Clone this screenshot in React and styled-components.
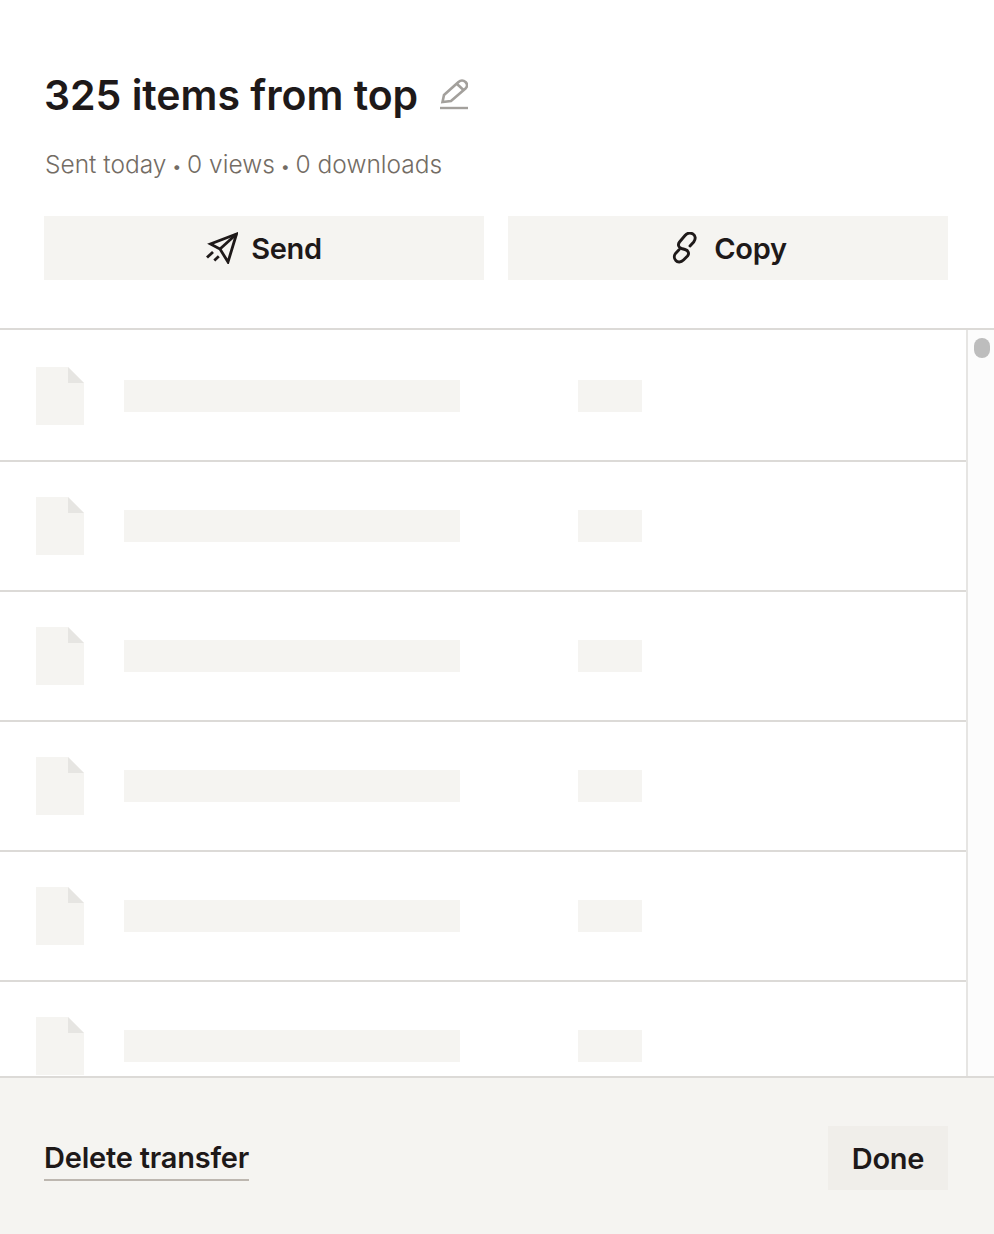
import React from 'react';
import styled, { createGlobalStyle } from 'styled-components';

const GlobalStyle = createGlobalStyle`
  html, body {
    margin: 0;
    padding: 0;
    background: #fff;
  }
  * {
    box-sizing: border-box;
  }
`;

const Wrapper = styled.div`
  display: flex;
  flex-direction: column;
  width: 994px;
  height: 1234px;
  overflow: hidden;
  font-family: Inter, "Liberation Sans", sans-serif;
  color: #1e1919;
`;

const Header = styled.header`
  height: 328px;
  padding: 68px 46px 0 44px;
  flex-shrink: 0;
`;

const TitleRow = styled.div`
  display: flex;
  align-items: center;
  height: 54px;
`;

const Title = styled.h1`
  margin: 0;
  font-size: 41px;
  line-height: 54px;
  font-weight: 600;
  letter-spacing: -0.03px;
`;

const EditButton = styled.button`
  display: flex;
  margin-left: 22px;
  padding: 0;
  border: 0;
  background: none;
  color: #a3a09c;
`;

const Meta = styled.p`
  margin: 25px 0 0 1px;
  font-size: 24.5px;
  line-height: 34px;
  font-weight: 300;
  color: #736c64;
`;

const Dot = styled.span`
  margin: 0 -1.6px;
  font-size: 18px;
  line-height: 1;
`;

const Actions = styled.div`
  display: grid;
  grid-template-columns: 1fr 1fr;
  gap: 24px;
  margin-top: 35px;
`;

const ActionButton = styled.button`
  display: flex;
  align-items: center;
  justify-content: center;
  gap: 13px;
  height: 64px;
  padding: 0;
  border: 0;
  background: #f5f4f1;
  color: inherit;
  font: inherit;
  font-size: 29px;
  font-weight: 600;
  letter-spacing: -0.3px;
`;

const Content = styled.section`
  display: flex;
  flex: 1;
  min-height: 0;
  border-top: 2px solid #dcdad7;
`;

const List = styled.ul`
  flex: 1;
  min-width: 0;
  margin: 0;
  padding: 2px 0 0;
  list-style: none;
  overflow: hidden;
`;

const Row = styled.li`
  display: flex;
  align-items: center;
  height: 130px;
  padding-left: 36px;
  border-bottom: 2px solid #dcdad7;
`;

const FileShape = styled.svg`
  flex-shrink: 0;
  margin-right: 40px;
`;

const Skeleton = styled.div`
  width: ${(props) => props.$width}px;
  height: 32px;
  margin-right: ${(props) => props.$gap || 0}px;
  background: #f5f4f1;
`;

const Rail = styled.div`
  width: 28px;
  flex-shrink: 0;
  padding: 8px 4px 0 6px;
  border-left: 2px solid #e6e5e3;
  background: #fcfcfc;
`;

const Thumb = styled.div`
  width: 16px;
  height: 20px;
  border-radius: 8px;
  background: #bdbdbd;
`;

const Footer = styled.footer`
  display: flex;
  align-items: center;
  justify-content: space-between;
  height: 158px;
  flex-shrink: 0;
  padding: 4px 46px 0 44px;
  border-top: 2px solid #dcdad7;
  background: #f5f4f1;
`;

const DeleteLink = styled.a`
  margin-top: 4px;
  padding-bottom: 3px;
  border-bottom: 2px solid #bdb7b0;
  font-size: 29px;
  line-height: 36px;
  font-weight: 600;
  letter-spacing: -0.22px;
`;

const DoneButton = styled.button`
  width: 120px;
  height: 64px;
  padding: 0;
  border: 0;
  background: #f0eeea;
  color: inherit;
  font: inherit;
  font-size: 29px;
  font-weight: 600;
  letter-spacing: -0.3px;
`;

const PencilIcon = () => (
  <svg width="28" height="32" viewBox="0 0 28 32" fill="none" stroke="currentColor" strokeWidth="2.6">
    <path d="M2.5 23 L4 16 L18.5 3 C20.5 1.2 23.5 1.2 25.5 3 C27.5 5 27.5 7.5 25.5 9.5 L11 22 Z" />
    <path d="M17 5 L23.5 11" />
    <path d="M0 29 H28" strokeWidth="2.4" />
  </svg>
);

const SendIcon = () => (
  <svg width="32" height="32" viewBox="0 0 32 32" fill="none" stroke="currentColor" strokeWidth="2.8">
    <path d="M30.5 2 L4.5 12 L14 17 L22 30 Z" />
    <path d="M30.5 2 L14 17" />
    <path d="M1 25.5 L7 20" />
    <path d="M8.3 28.5 L12.8 24.3" />
  </svg>
);

const LinkIcon = () => (
  <svg width="32" height="32" viewBox="0 0 32 32" fill="none" stroke="currentColor" strokeWidth="2.9" strokeLinecap="round" strokeLinejoin="round">
    <path d="M21 14 L24.7 10 C27 7 26.5 3.5 24 2 C21 0.5 18 1.2 16 3.5 L10.5 10 C8.5 12.5 9.5 15.5 12.5 16.5 L16 17.5 C19.5 18.5 20.5 21.5 18.5 24 L14.5 28 C12 30.5 8.5 30.5 6.8 28.5 C4.8 26.5 5 23.5 6.5 21.5 L10 17.8" />
  </svg>
);

const FileIcon = () => (
  <FileShape width="48" height="58" viewBox="0 0 48 58">
    <path d="M0 0 H32 L48 16 V58 H0 Z" fill="#f5f4f1" />
    <path d="M32 0 L48 16 H32 Z" fill="#e6e5e2" />
  </FileShape>
);

const rows = [0, 1, 2, 3, 4, 5];

const App = () => (
  <Wrapper>
    <GlobalStyle />
    <Header>
      <TitleRow>
        <Title>325 items from top</Title>
        <EditButton aria-label="Edit title">
          <PencilIcon />
        </EditButton>
      </TitleRow>
      <Meta>
        Sent today <Dot>•</Dot> 0 views <Dot>•</Dot> 0 downloads
      </Meta>
      <Actions>
        <ActionButton>
          <SendIcon />
          Send
        </ActionButton>
        <ActionButton>
          <LinkIcon />
          Copy
        </ActionButton>
      </Actions>
    </Header>
    <Content>
      <List>
        {rows.map((row) => (
          <Row key={row}>
            <FileIcon />
            <Skeleton $width={336} $gap={118} />
            <Skeleton $width={64} />
          </Row>
        ))}
      </List>
      <Rail>
        <Thumb />
      </Rail>
    </Content>
    <Footer>
      <DeleteLink>Delete transfer</DeleteLink>
      <DoneButton>Done</DoneButton>
    </Footer>
  </Wrapper>
);

export default App;
